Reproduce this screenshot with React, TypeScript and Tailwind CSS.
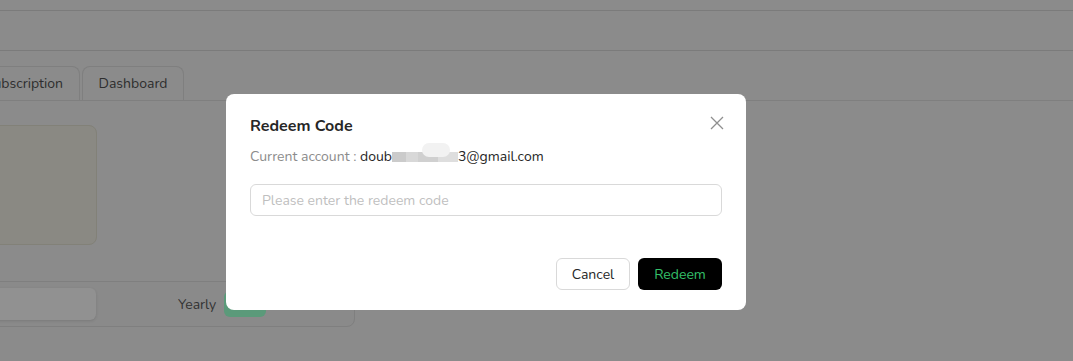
import React from "react";

export default function App() {
  const font = { fontFamily: "Nunito, Lato, 'Noto Sans', sans-serif" };
  return (
    <div
      className="relative h-[361px] w-[1073px] overflow-hidden bg-[#8b8b8b] text-[#2a2a2a]"
      style={font}
    >
      {/* page behind overlay */}
      <div className="h-[11px] border-b border-[#7b7b7b]" />
      <div className="h-[40px] border-b border-[#7b7b7b]" />
      <div className="mt-[16px] flex h-[34px] items-end border-b border-[#7f7f7f]">
        <div className="ml-[-20px] flex h-[34px] w-[100px] items-center justify-end rounded-t-[8px] border border-b-0 border-[#7f7f7f] pr-[16px] text-[14px] text-[#2e2e2e]">
          Subscription
        </div>
        <div className="ml-[2px] flex h-[34px] w-[102px] items-center justify-center rounded-t-[8px] border border-b-0 border-[#7f7f7f] text-[14px] text-[#2e2e2e]">
          Dashboard
        </div>
      </div>
      <div className="mt-[24px] ml-[-20px] h-[120px] w-[117px] rounded-[8px] border border-[#828178] bg-[#8a8983]" />
      <div className="mt-[36px] ml-[-20px] flex h-[46px] w-[375px] items-center rounded-br-[8px] border border-[#7f7f7f] bg-[#8a8a8a] pl-[8px]">
        <div className="h-[32px] w-[107px] rounded-[6px] bg-[#919191] shadow-[0_1px_3px_rgba(0,0,0,0.12)]" />
        <span className="ml-[82px] text-[14px] text-[#333]">Yearly</span>
        <div className="ml-[8px] h-[26px] w-[42px] rounded-[6px] bg-[#5b9a7a]" />
      </div>

      {/* modal */}
      <div className="absolute left-[226px] top-[94px] flex h-[216px] w-[520px] flex-col rounded-[8px] bg-white px-[24px] pt-[20px] pb-[20px]">
        <div className="flex items-center justify-between">
          <h2 className="text-[16px] font-bold leading-[24px] text-[#262626]">Redeem Code</h2>
          <svg
            width="14"
            height="14"
            viewBox="0 0 14 14"
            className="mr-[-2px] mt-[-6px]"
            stroke="#8f8f8f"
            strokeWidth="1.3"
            fill="none"
          >
            <path d="M1 1L13 13M13 1L1 13" />
          </svg>
        </div>
        <div className="mt-[9px] flex items-center text-[14px] leading-[20px]">
          <span className="text-[#8c8c8c]">Current account :&nbsp;</span>
          <span className="text-[#262626]">doub</span>
          <span className="relative inline-flex h-[12px] w-[66px] items-center">
            <span className="h-[10px] w-[14px] bg-[#cbcbcb]" />
            <span className="h-[10px] w-[12px] bg-[#d8d8d8]" />
            <span className="h-[10px] w-[20px] bg-[#d0d0d0]" />
            <span className="h-[10px] w-[20px] bg-[#dedede]" />
            <span className="absolute left-[30px] top-[-8px] h-[14px] w-[28px] rounded-full bg-[#f2f2f2]" />
          </span>
          <span className="text-[#262626]">3@gmail.com</span>
        </div>
        <div className="mt-[17px] flex h-[32px] items-center rounded-[6px] border border-[#d9d9d9] px-[11px] text-[14px] text-[#bfbfbf]">
          Please enter the redeem code
        </div>
        <div className="mt-auto flex justify-end gap-[8px]">
          <button className="h-[32px] w-[74px] rounded-[6px] border border-[#d9d9d9] bg-white text-[14px] text-[#262626]">
            Cancel
          </button>
          <button className="h-[32px] w-[84px] rounded-[6px] bg-black text-[14px] text-[#34c06a]">
            Redeem
          </button>
        </div>
      </div>
    </div>
  );
}
